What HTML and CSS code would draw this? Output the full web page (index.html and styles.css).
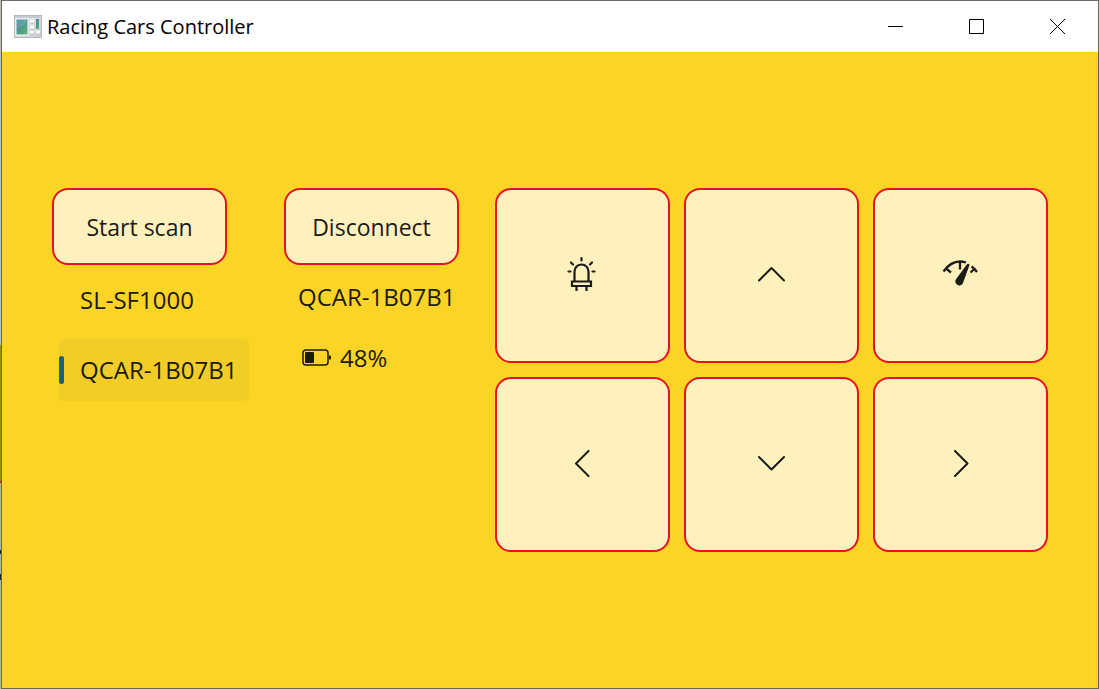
FILE: index.html
```html
<!DOCTYPE html>
<html lang="en">
<head>
<meta charset="utf-8">
<title>Racing Cars Controller</title>
<link rel="stylesheet" href="styles.css">
</head>
<body>
<div class="window">
  <header class="titlebar">
    <svg class="app-icon" width="28" height="24" viewBox="0 0 28 24" aria-hidden="true">
      <defs>
        <linearGradient id="pane" x1="0" y1="0" x2="1" y2="1"><stop offset="0" stop-color="#4a80ae"/><stop offset=".5" stop-color="#4f9b8c"/><stop offset="1" stop-color="#64b878"/></linearGradient>
        <linearGradient id="frame" x1="0" y1="0" x2="1" y2="1"><stop offset="0" stop-color="#eceef0"/><stop offset="1" stop-color="#c9cbce"/></linearGradient>
      </defs>
      <rect x=".5" y=".5" width="27" height="22" fill="url(#frame)" stroke="#b3b8bd"/>
      <path d="M1 2h26" stroke="#c6ccd3" stroke-width="2"/>
      <rect x="2" y="4" width="12" height="16" fill="url(#pane)" stroke="#f5f7f8"/>
      <path d="M3 13c4 0 8-3 10-8v-.5H2.500z" fill="#fff" opacity=".12"/>
      <path d="M16 6h4M16 12h4M16 17h4M22 17h4" stroke="#f8f8f9" stroke-width="3"/>
      <path d="M16 8.500h4M16 14.500h4M16 19.500h4M22 19.500h4" stroke="#c3c5c9"/>
      <rect x="22" y="4" width="3" height="10" fill="url(#pane)"/>
    </svg>
    <h1 class="title">Racing Cars Controller</h1>
    <div class="window-controls">
      <button class="window-button" aria-label="Minimize"><svg width="15" height="15" viewBox="0 0 15 15"><path d="M0 7.500h15"/></svg></button>
      <button class="window-button" aria-label="Maximize"><svg width="15" height="15" viewBox="0 0 15 15"><path d="M.5.5h14v14H.5z"/></svg></button>
      <button class="window-button" aria-label="Close"><svg width="15" height="15" viewBox="0 0 15 15"><path d="M0 0l15 15M15 0L0 15"/></svg></button>
    </div>
  </header>
  <main class="content">
    <section class="scan">
      <button class="action">Start scan</button>
      <ul class="devices">
        <li><button class="device">SL-SF1000</button></li>
        <li><button class="device selected" aria-pressed="true">QCAR-1B07B1</button></li>
      </ul>
    </section>
    <section class="connection">
      <button class="action">Disconnect</button>
      <p class="connected-name">QCAR-1B07B1</p>
      <p class="battery">
        <svg width="30" height="18" viewBox="0 0 30 18" aria-hidden="true"><rect x="1" y="1" width="25" height="15" rx="3" fill="none" stroke="#1c1a08" stroke-width="1.500"/><rect x="3" y="3" width="9" height="11" rx="1" fill="#1c1a08"/><path d="M27 6.500h1q1 0 1 1v2q0 1-1 1h-1z" fill="#1c1a08"/></svg>
        <span>48%</span>
      </p>
    </section>
    <section class="pad" aria-label="Driving controls">
      <button class="key" aria-label="Lights"><svg width="31" height="37" viewBox="1 0 31 37"><g fill="none" stroke="#1d1b16" stroke-width="2.200"><path d="M8.500 25V15.500a7 7 0 0 1 14 0V25"/><path d="M6 25.500h19v4.500H6z"/><path d="M10.500 30v5M20.500 30v5"/><path d="M15.500 2v2.500M5 6.500l2 2M26 6.500l-2 2M2.500 15.500h2M26.500 15.500h2" stroke-linecap="round"/></g></svg></button>
      <button class="key" aria-label="Forward"><svg width="27" height="27" viewBox="0 0 27 27"><path class="chevron" d="M1 19.500L13.500 7 26 19.500"/></svg></button>
      <button class="key" aria-label="Speed"><svg width="37" height="37" viewBox="0 0 37 37"><g fill="none" stroke="#1d1b16" stroke-width="2.300"><path d="M1.500 15.500Q8.500 5.500 18 5.500q3 0 6 1"/><path d="M29.500 10.500q3 2 5.500 5.500"/><path d="M18 6v7.500M4 12.500l5 4M33 12.500l-4.500 4"/></g><path d="M26.500 7.700q1.200.4.900 1.600L21 27a4 4 0 1 1-6.700-4.200L25 8.200q.6-.7 1.500-.5z" fill="#1d1b16"/></svg></button>
      <button class="key" aria-label="Left"><svg width="27" height="27" viewBox="0 0 27 27"><path class="chevron" d="M19.500 1L7 13.500 19.500 26"/></svg></button>
      <button class="key" aria-label="Backward"><svg width="27" height="27" viewBox="0 0 27 27"><path class="chevron" d="M1 7l12.500 12.500L26 7"/></svg></button>
      <button class="key" aria-label="Right"><svg width="27" height="27" viewBox="0 0 27 27"><path class="chevron" d="M8 1l12.500 12.500L8 26"/></svg></button>
    </section>
  </main>
</div>
</body>
</html>
```
FILE: styles.css
```css
* {
  box-sizing: border-box;
}

body {
  margin: 0;
  padding-left: 1px;
  background: linear-gradient(#b9bcc0 345px, #a58b18 345px, #a58b18 481px, #b80d1a 481px, #b80d1a 483px, #b5b39b 483px, #b5b39b 550px, #222 550px, #222 554px, #b5b39b 554px, #b5b39b 574px, #222 574px, #222 580px, #b5b39b 580px);
  color: #1c1a08;
  font-family: "Segoe UI", "Open Sans", "Noto Sans", sans-serif;
  font-size: 24px;
  line-height: 32px;
}

button {
  margin: 0;
  padding: 0;
  border: 0;
  background: none;
  color: inherit;
  font: inherit;
}

.window {
  display: flex;
  flex-direction: column;
  min-height: 100vh;
  border: 1px solid #6b6650;
  border-top-color: #6c6c6c;
  background: #fcd426;
}

.titlebar {
  display: flex;
  align-items: center;
  height: 51px;
  padding-left: 12px;
  background: #fff;
  color: #000;
}

.title {
  flex: 1;
  margin: 0 0 0 5px;
  font-size: 20px;
  font-weight: 400;
}

.window-controls {
  display: flex;
  align-self: stretch;
}

.window-button {
  display: flex;
  align-items: center;
  justify-content: center;
  width: 81px;
}

.window-button svg {
  fill: none;
  stroke: #000;
}

.content {
  flex: 1;
  display: grid;
  grid-template-columns: minmax(0, 218fr) minmax(0, 197fr) minmax(0, 553fr);
  align-content: center;
  align-items: start;
  gap: 14px;
  padding: 0 50px;
}

.action,
.key {
  border: 2px solid #e81123;
  border-radius: 16px;
  background: #fff1be;
  color: #1d1b16;
}

.action {
  width: 175px;
  height: 77px;
  font-size: 23px;
}

.devices {
  display: grid;
  gap: 8px;
  margin: 4px 0 0;
  padding: 0 0 0 7px;
  list-style: none;
}

.device {
  position: relative;
  width: 190px;
  height: 62px;
  padding-left: 21px;
  border-radius: 6px;
  text-align: left;
  white-space: nowrap;
}

.selected {
  background: #f2cc27;
}

.selected::before {
  content: "";
  position: absolute;
  left: 0;
  top: 17px;
  width: 5px;
  height: 28px;
  border-radius: 3px;
  background: #1b6078;
}

.connected-name {
  margin: 16px 0 0 14px;
}

.battery {
  display: flex;
  align-items: center;
  gap: 8px;
  margin: 29px 0 0 18px;
}

.pad {
  display: grid;
  grid-template-columns: repeat(3, minmax(0, 1fr));
  gap: 14px;
}

.key {
  display: flex;
  align-items: center;
  justify-content: center;
  min-width: 0;
  padding-bottom: 2px;
  aspect-ratio: 1;
}

.chevron {
  fill: none;
  stroke: #1d1b16;
  stroke-width: 2;
  stroke-linecap: round;
  stroke-linejoin: round;
}
```
